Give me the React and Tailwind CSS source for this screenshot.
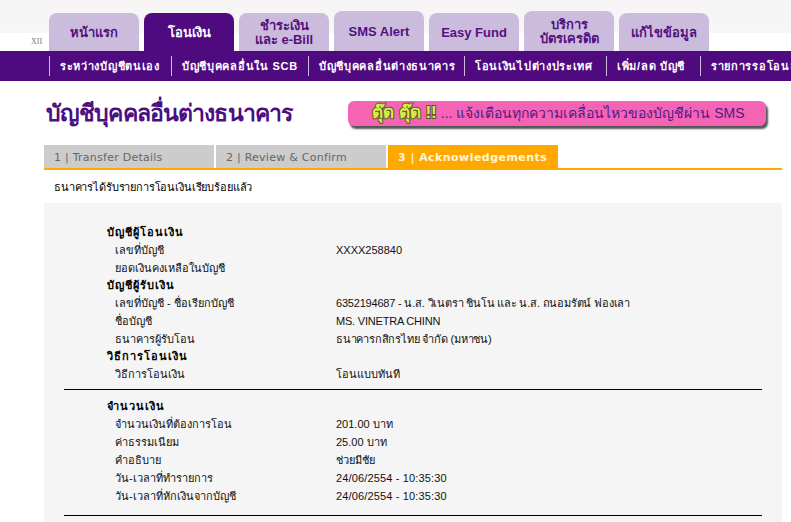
const mainTabs = [
    { label: ["หน้าแรก"] },
    { label: ["โอนเงิน"], active: true },
    { label: ["ชำระเงิน", "และ e-Bill"] },
    { label: ["SMS Alert"], tall: true },
    { label: ["Easy Fund"] },
    { label: ["บริการ", "บัตรเครดิต"], tall: true },
    { label: ["แก้ไขข้อมูล"] },
];

const subMenu = [
    { label: "ระหว่างบัญชีตนเอง", w: "w-[122px]" },
    { label: "บัญชีบุคคลอื่นใน SCB", w: "w-[137px]" },
    { label: "บัญชีบุคคลอื่นต่างธนาคาร", w: "w-[156px]" },
    { label: "โอนเงินไปต่างประเทศ", w: "w-[142px]" },
    { label: "เพิ่ม/ลด บัญชี", w: "w-[94px]" },
    { label: "รายการรอโอนล่วงหน้า", w: "w-[140px]" },
];

const steps = [
    { label: "1 | Transfer Details" },
    { label: "2 | Review & Confirm" },
    { label: "3 | Acknowledgements", active: true },
];

const rows = [
    { head: "บัญชีผู้โอนเงิน" },
    { label: "เลขที่บัญชี", value: "XXXX258840" },
    { label: "ยอดเงินคงเหลือในบัญชี", value: "" },
    { head: "บัญชีผู้รับเงิน" },
    { label: "เลขที่บัญชี - ชื่อเรียกบัญชี", value: "6352194687 - น.ส. วิเนตรา ชินโน และ น.ส. ถนอมรัตน์ ฟองเลา", tight: true },
    { label: "ชื่อบัญชี", value: "MS. VINETRA CHINN", tight: true },
    { label: "ธนาคารผู้รับโอน", value: "ธนาคารกสิกรไทย จำกัด (มหาชน)", tight: true },
    { head: "วิธีการโอนเงิน" },
    { label: "วิธีการโอนเงิน", value: "โอนแบบทันที" },
];

const amountRows = [
    { head: "จำนวนเงิน" },
    { label: "จำนวนเงินที่ต้องการโอน", value: "201.00 บาท" },
    { label: "ค่าธรรมเนียม", value: "25.00 บาท" },
    { label: "คำอธิบาย", value: "ช่วยมีชัย" },
    { label: "วัน-เวลาที่ทำรายการ", value: "24/06/2554 - 10:35:30", wide: true },
    { label: "วัน-เวลาที่หักเงินจากบัญชี", value: "24/06/2554 - 10:35:30", wide: true },
];

const Row = ({ row, height }) => {
    if (row.head) {
        return <p className={"pl-[43px] text-[11px] leading-[18px] font-bold tracking-[1px] text-black " + height}>{row.head}</p>;
    }
    return (
        <div className={"flex text-[11px] leading-[18px] text-[#111] " + height}>
            <p className="w-[272px] shrink-0 pl-[51px]">{row.label}</p>
            <p className={"whitespace-nowrap " + (row.tight ? "tracking-[-0.2px]" : row.wide ? "tracking-[0.15px]" : "")}>{row.value}</p>
        </div>
    );
};

const App = () => {
    return (
        <div className="h-[522px] w-[791px] overflow-hidden bg-white font-['Liberation_Sans','Noto_Sans',sans-serif]">
            <div className="relative flex h-[51px] items-end bg-[linear-gradient(#f6f4f5_0,#f7f7f7_33px,#ffffff_33px)] pl-[49px]">
                <span className="absolute left-[31px] top-[36px] font-['Liberation_Serif',serif] text-[8px] text-[#777]">XII</span>
                <div className="flex items-end gap-[5px]">
                    {mainTabs.map((tab) => (
                        <div
                            key={tab.label[0]}
                            className={
                                "flex w-[90px] flex-col items-center justify-center rounded-t-lg pt-[2px] text-[13px] leading-[14px] font-bold " +
                                (tab.tall ? "h-[40px] " : "h-[38px] ") +
                                (tab.active ? "bg-[#4f0a80] text-white" : "bg-[#cbbcdd] text-[#55107f]")
                            }
                        >
                            {tab.label.map((line) => (
                                <span key={line} className="whitespace-nowrap">{line}</span>
                            ))}
                        </div>
                    ))}
                </div>
            </div>

            <div className="flex h-[30px] items-center overflow-hidden bg-[#4f0a80] pl-[49px]">
                {subMenu.map((item) => (
                    <div key={item.label} className={"flex h-[20px] shrink-0 items-center border-l border-[#cbbcdd] pl-[10px] " + item.w}>
                        <span className="whitespace-nowrap text-[11px] font-bold tracking-[0.7px] text-white">{item.label}</span>
                    </div>
                ))}
            </div>

            <div className="flex h-[64px] items-center pl-[46px]">
                <h1 className="w-[302px] shrink-0 whitespace-nowrap text-[23px] font-bold tracking-[-0.88px] text-[#4b0f82]">บัญชีบุคคลอื่นต่างธนาคาร</h1>
                <div className="flex h-[25px] w-[418px] items-center gap-[4px] rounded-md bg-[#f564b4] pl-[24px] text-[14px] text-[#4f1a88] shadow-[2px_3px_2px_#555]">
                    <span className="whitespace-nowrap text-[17px] font-bold text-[#d9ee4a] [paint-order:stroke_fill] [-webkit-text-stroke:2px_#5a5a20]">ตุ๊ด ตุ๊ด !!</span>
                    <span className="whitespace-nowrap">... แจ้งเตือนทุกความเคลื่อนไหวของบัญชีผ่าน SMS</span>
                </div>
            </div>

            <div className="ml-[44px] flex w-[738px] gap-[2px] border-b-2 border-[#ffa800] font-['DejaVu_Sans',sans-serif] text-[11px] leading-[25px]">
                {steps.map((step) => (
                    <div
                        key={step.label}
                        className={
                            "h-[23px] w-[170px] pl-[10px] " +
                            (step.active ? "bg-[#ffa800] font-bold tracking-[0.45px] text-[#fff6d8]" : "bg-[#cccccc] tracking-[0.25px] text-[#666]")
                        }
                    >
                        {step.label}
                    </div>
                ))}
            </div>

            <p className="ml-[54px] mt-[9px] h-[24px] text-[11px] leading-[16px] tracking-[-0.15px] text-black">ธนาคารได้รับรายการโอนเงินเรียบร้อยแล้ว</p>

            <div className="ml-[44px] w-[738px] bg-[#f5f5f5] px-[20px] pt-[20px] pb-[20px]">
                <div className="border-b border-black pb-[6px]">
                    {rows.map((row, i) => <Row key={i} row={row} height="h-[17.75px]" />)}
                </div>
                <div className="border-b border-black pt-[7px] pb-[10px]">
                    {amountRows.map((row, i) => <Row key={i} row={row} height="h-[18px]" />)}
                </div>
            </div>
        </div>
    );
};

export default App;
